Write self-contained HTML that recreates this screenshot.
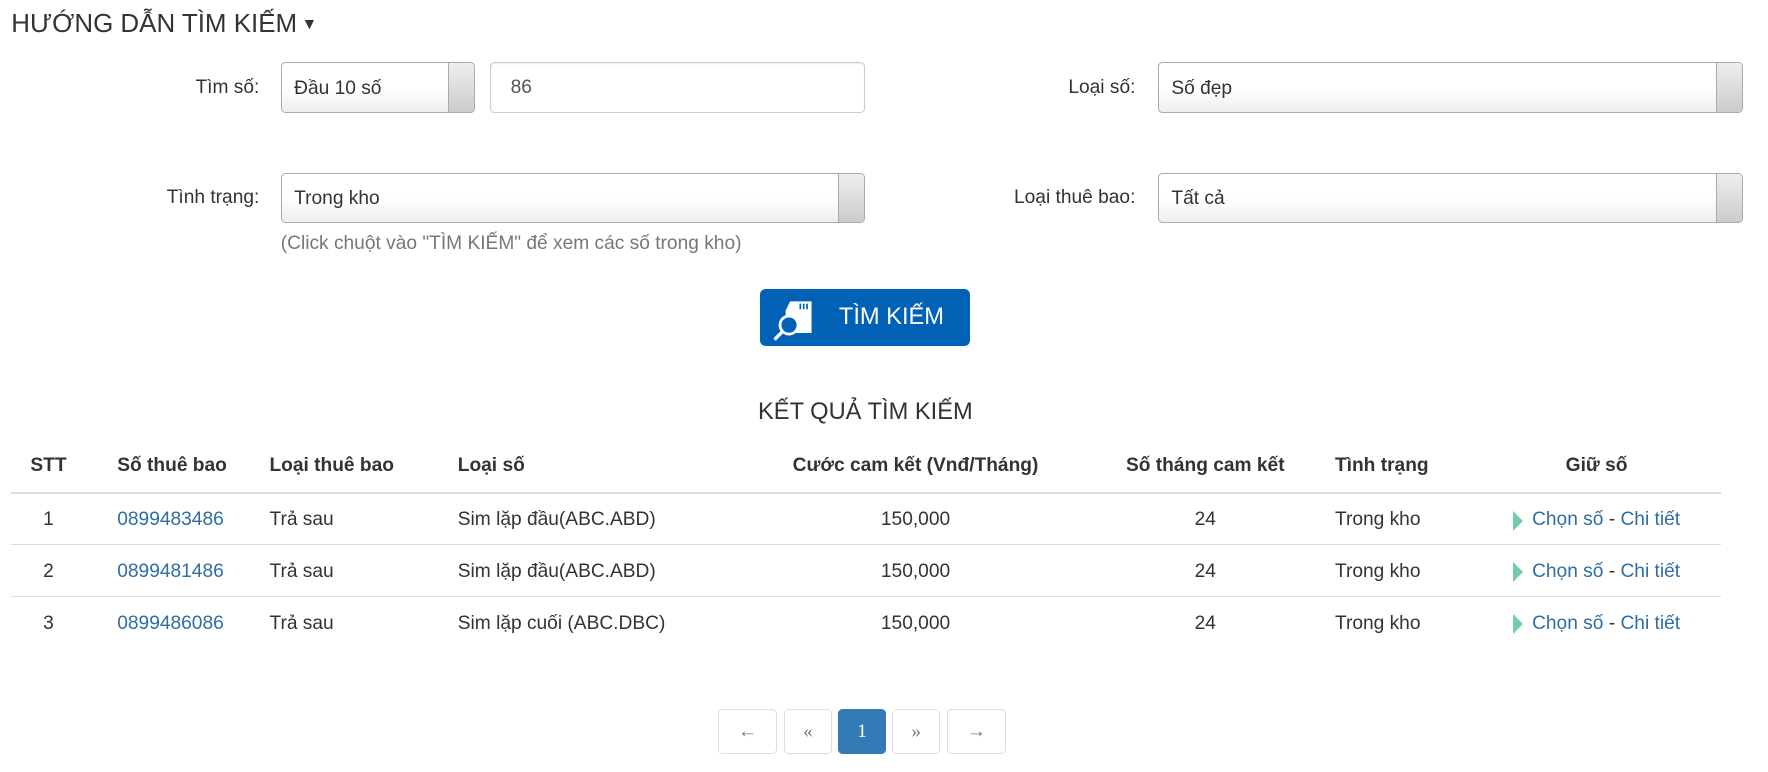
<!DOCTYPE html>
<html><head><meta charset="utf-8"><style>
html,body{margin:0;padding:0;background:#fff;overflow:hidden}
body{width:1768px;height:772px}
#w{zoom:1.12755;position:relative;width:1568px;height:685px;font-family:"Liberation Sans",Arial,sans-serif;color:#333;font-size:17px}
.a{position:absolute;white-space:nowrap}
.lbl{text-align:right;width:230px}
.sel{position:absolute;box-sizing:border-box;height:45px;border:1px solid #aaa;border-radius:4px;background:linear-gradient(#fff 50%,#eee);}
.sel span{position:absolute;left:11px;top:13px}
.sel i{position:absolute;right:0;top:0;bottom:0;width:22px;border-left:1px solid #aaa;background:linear-gradient(#eee,#ccc);border-radius:0 3px 3px 0}
.inp{position:absolute;box-sizing:border-box;height:45px;border:1px solid #ccc;border-radius:4px;background:#fff;box-shadow:inset 0 1px 1px rgba(0,0,0,.08)}
table{position:absolute;left:10px;top:391px;width:1516px;border-collapse:collapse;table-layout:fixed}
th{font-weight:bold;height:45px;border-bottom:2px solid #ddd;text-align:left;padding:0}
td{height:44px;box-sizing:border-box;border-bottom:1px solid #ddd;padding:2px 0 0;white-space:nowrap}
tr.r{height:46px}
.c{text-align:center}
a{color:#2f6da3;text-decoration:none}
.arr{display:inline-block;width:0;height:0;border-left:9px solid #5cbfa0;border-top:9px solid transparent;border-bottom:9px solid transparent;vertical-align:-5px;margin-right:8px;opacity:.85}
.pg{position:absolute;top:629px;height:40px;box-sizing:border-box;border:1px solid #ddd;border-radius:4px;background:#fff;font-family:"Liberation Serif",serif;font-size:17px;text-align:center;line-height:39px;color:#777}
</style></head><body><div id="w">
<div class="a" style="left:10px;top:9px;font-size:23px">HƯỚNG DẪN TÌM KIẾM<span style="font-size:14px;vertical-align:3px;margin-left:4px">▼</span></div>

<div class="a lbl" style="left:0;top:68px">Tìm số:</div>
<div class="sel" style="left:249px;top:55px;width:172px"><span>Đầu 10 số</span><i></i></div>
<div class="inp" style="left:435px;top:55px;width:332px"><span class="a" style="left:17px;top:12px;color:#555">86</span></div>
<div class="a lbl" style="left:777px;top:68px">Loại số:</div>
<div class="sel" style="left:1027px;top:55px;width:519px"><span>Số đẹp</span><i></i></div>

<div class="a lbl" style="left:0;top:166px">Tình trạng:</div>
<div class="sel" style="left:249px;top:153px;width:518px"><span>Trong kho</span><i></i></div>
<div class="a lbl" style="left:777px;top:166px">Loại thuê bao:</div>
<div class="sel" style="left:1027px;top:153px;width:519px"><span>Tất cả</span><i></i></div>
<div class="a" style="left:249px;top:207px;color:#777">(Click chuột vào "TÌM KIẾM" để xem các số trong kho)</div>

<div class="a" style="left:674px;top:256px;width:186px;height:51px;background:#0161b5;border-radius:5px">
<svg class="a" style="left:10px;top:8px" width="42" height="38" viewBox="0 0 42 38"><path d="M17 3h19v28H13V11z" fill="#fff"/><path d="M26 5v5M29 5v5M32 5v5" stroke="#0161b5" stroke-width="1.5"/><circle cx="16" cy="24" r="8" fill="#0161b5" stroke="#fff" stroke-width="2.5"/><path d="M10 30l-6 6" stroke="#fff" stroke-width="3" stroke-linecap="round"/></svg>
<span class="a" style="left:70px;top:14px;color:#fff;font-size:21px">TÌM KIẾM</span></div>

<div class="a" style="left:0;width:1535px;text-align:center;top:354px;font-size:21px">KẾT QUẢ TÌM KIẾM</div>

<table>
<colgroup><col style="width:66px"><col style="width:28px"><col style="width:135px"><col style="width:167px"><col style="width:262px"><col style="width:288px"><col style="width:226px"><col style="width:124px"><col></colgroup>
<tr><th class="c">STT</th><th></th><th>Số thuê bao</th><th>Loại thuê bao</th><th>Loại số</th><th class="c">Cước cam kết (Vnđ/Tháng)</th><th class="c">Số tháng cam kết</th><th style="padding-left:2px">Tình trạng</th><th class="c">Giữ số</th></tr>
<tr class="r"><td class="c">1</td><td></td><td><a>0899483486</a></td><td>Trả sau</td><td>Sim lặp đầu(ABC.ABD)</td><td class="c">150,000</td><td class="c">24</td><td style="padding-left:2px">Trong kho</td><td class="c"><span class="arr"></span><a>Chọn số</a> - <a>Chi tiết</a></td></tr>
<tr class="r"><td class="c">2</td><td></td><td><a>0899481486</a></td><td>Trả sau</td><td>Sim lặp đầu(ABC.ABD)</td><td class="c">150,000</td><td class="c">24</td><td style="padding-left:2px">Trong kho</td><td class="c"><span class="arr"></span><a>Chọn số</a> - <a>Chi tiết</a></td></tr>
<tr class="r"><td class="c" style="border:0">3</td><td style="border:0"></td><td style="border:0"><a>0899486086</a></td><td style="border:0">Trả sau</td><td style="border:0">Sim lặp cuối (ABC.DBC)</td><td class="c" style="border:0">150,000</td><td class="c" style="border:0">24</td><td style="border:0;padding-left:2px">Trong kho</td><td class="c" style="border:0"><span class="arr"></span><a>Chọn số</a> - <a>Chi tiết</a></td></tr>
</table>

<div class="pg" style="left:637px;width:52px">←</div>
<div class="pg" style="left:695px;width:43px">«</div>
<div class="pg" style="left:743px;width:43px;background:#337ab7;border-color:#337ab7;color:#fff">1</div>
<div class="pg" style="left:791px;width:43px">»</div>
<div class="pg" style="left:840px;width:52px">→</div>
</div></body></html>
